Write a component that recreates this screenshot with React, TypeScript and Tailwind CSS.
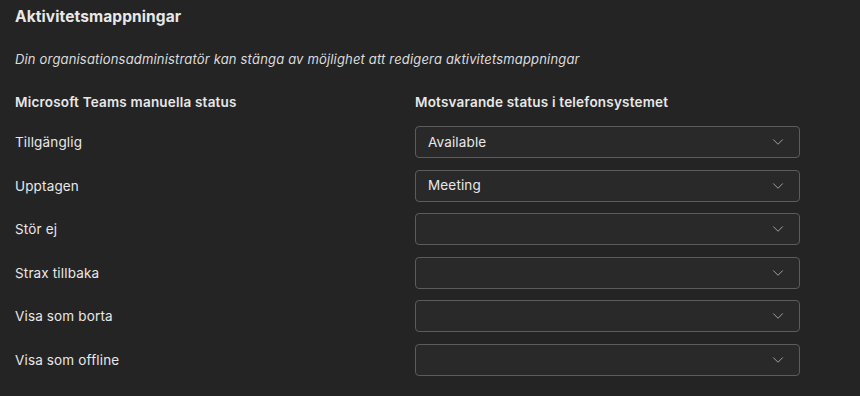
import { ChevronDown } from 'lucide-react';

const rows = [
  { label: 'Tillgänglig', value: 'Available' },
  { label: 'Upptagen', value: 'Meeting' },
  { label: 'Stör ej', value: '' },
  { label: 'Strax tillbaka', value: '' },
  { label: 'Visa som borta', value: '' },
  { label: 'Visa som offline', value: '' },
];

export default function App() {
  return (
    <div className="w-[860px] h-[396px] bg-[#242424] text-[#e8e8e8] font-['Inter',sans-serif] px-[15px] overflow-hidden">
      <h1 className="text-[15.5px] font-bold pt-[6px] leading-[22px] tracking-[0.1px]">Aktivitetsmappningar</h1>
      <p className="italic text-[13px] text-[#dcdcdc] mt-[21px] leading-[20px] tracking-[0.17px]">
        Din organisationsadministratör kan stänga av möjlighet att redigera aktivitetsmappningar
      </p>
      <div className="grid grid-cols-[400px_385px] mt-[23px] text-[13.5px] font-semibold leading-[20px] tracking-[0.2px]">
        <div>Microsoft Teams manuella status</div>
        <div>Motsvarande status i telefonsystemet</div>
      </div>
      <div className="mt-[14px] flex flex-col gap-[11.6px]">
        {rows.map((r) => (
          <div key={r.label} className="grid grid-cols-[400px_385px] items-center text-[13.5px] tracking-[0.15px]">
            <div className="leading-[20px]">{r.label}</div>
            <div className="h-[32px] rounded-[4px] border border-[#5c5c5c] bg-[#292929] flex items-center justify-between pl-[12px] pr-[12px]">
              <span>{r.value}</span>
              <ChevronDown size={18} strokeWidth={1.25} className="text-[#a8a8a8]" />
            </div>
          </div>
        ))}
      </div>
    </div>
  );
}
